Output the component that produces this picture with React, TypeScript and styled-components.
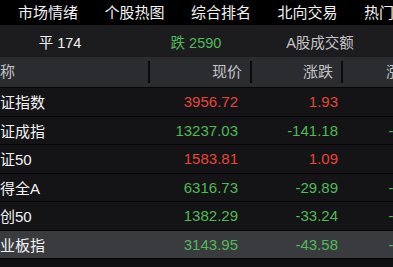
import React from 'react';
import styled, { createGlobalStyle } from 'styled-components';

const GlobalStyle = createGlobalStyle`
  html, body {
    margin: 0;
    padding: 0;
    background: #0f0f11;
  }
  body {
    font-family: "Liberation Sans", "Noto Sans CJK SC", sans-serif;
    -webkit-font-smoothing: antialiased;
  }
`;

const Colors = {
  red: '#e8453c',
  green: '#4fba58',
  text: '#f2f2f2',
  sub: '#c4c4c6',
};

const COLUMNS = '163px 102px 91px 98px';

const Screen = styled.div`
  width: 393px;
  height: 267px;
  overflow: hidden;
  background: #0f0f11;
  display: flex;
  flex-direction: column;
`;

const Nav = styled.nav`
  height: 25px;
  background: #000;
  display: flex;
  align-items: center;
  gap: 26.5px;
  padding-left: 18px;
  white-space: nowrap;
  overflow: hidden;
`;

const NavItem = styled.span`
  color: ${Colors.text};
  font-size: 15px;
  line-height: 25px;
`;

const Summary = styled.div`
  height: 32px;
  background: #1c1c1e;
  display: grid;
  grid-template-columns: 120px 152px 96px;
  align-items: center;
`;

const SummaryCell = styled.span<{ $color: string }>`
  color: ${(p) => p.$color};
  font-size: 14.5px;
  text-align: center;
  white-space: nowrap;
`;

const Table = styled.div`
  margin-left: -15px;
  width: 454px;
  display: flex;
  flex-direction: column;
`;

const HeadRow = styled.div`
  height: 30px;
  background: #2b2c30;
  display: grid;
  grid-template-columns: ${COLUMNS};
  align-items: center;
  border-bottom: 1px solid #050506;
`;

const HeadCell = styled.div<{ $divider?: boolean }>`
  color: ${Colors.sub};
  font-size: 15px;
  text-align: ${(p) => (p.$divider ? 'right' : 'left')};
  padding-right: ${(p) => (p.$divider ? '8px' : '0')};
  height: 22px;
  line-height: 22px;
  border-left: ${(p) => (p.$divider ? '2px solid #0a0a0b' : 'none')};
  white-space: nowrap;
  overflow: hidden;
`;

const Row = styled.div<{ $active?: boolean }>`
  height: 27.5px;
  background: ${(p) => (p.$active ? '#3a3b3f' : '#141416')};
  display: grid;
  grid-template-columns: ${COLUMNS};
  align-items: center;
  border-bottom: 1px solid #050506;
`;

const Name = styled.div`
  color: ${Colors.text};
  font-size: 15px;
  white-space: nowrap;
`;

const Num = styled.div<{ $color: string; $pad: number }>`
  color: ${(p) => p.$color};
  font-size: 15px;
  text-align: right;
  padding-right: ${(p) => p.$pad}px;
  white-space: nowrap;
`;

const navItems = ['市场情绪', '个股热图', '综合排名', '北向交易', '热门板块'];

const indices = [
  { name: '上证指数', price: '3956.72', change: '1.93', pct: '0.05%' },
  { name: '深证成指', price: '13237.03', change: '-141.18', pct: '-1.06%' },
  { name: '上证50', price: '1583.81', change: '1.09', pct: '0.07%' },
  { name: '万得全A', price: '6316.73', change: '-29.89', pct: '-0.47%' },
  { name: '科创50', price: '1382.29', change: '-33.24', pct: '-2.35%' },
  { name: '创业板指', price: '3143.95', change: '-43.58', pct: '-1.37%' },
];

const App: React.FC = () => {
  return (
    <Screen>
      <GlobalStyle />
      <Nav>
        {navItems.map((item) => (
          <NavItem key={item}>{item}</NavItem>
        ))}
      </Nav>
      <Summary>
        <SummaryCell $color={Colors.text}>平 174</SummaryCell>
        <SummaryCell $color={Colors.green}>跌 2590</SummaryCell>
        <SummaryCell $color={Colors.sub}>A股成交额</SummaryCell>
      </Summary>
      <Table>
        <HeadRow>
          <HeadCell>名称</HeadCell>
          <HeadCell $divider>现价</HeadCell>
          <HeadCell $divider>涨跌</HeadCell>
          <HeadCell $divider>涨跌幅</HeadCell>
        </HeadRow>
        {indices.map((row, i) => {
          const color = row.change.startsWith('-') ? Colors.green : Colors.red;
          return (
            <Row key={row.name} $active={i === indices.length - 1}>
              <Name>{row.name}</Name>
              <Num $color={color} $pad={12}>
                {row.price}
              </Num>
              <Num $color={color} $pad={3}>
                {row.change}
              </Num>
              <Num $color={color} $pad={3}>
                {row.pct}
              </Num>
            </Row>
          );
        })}
      </Table>
    </Screen>
  );
};

export default App;
